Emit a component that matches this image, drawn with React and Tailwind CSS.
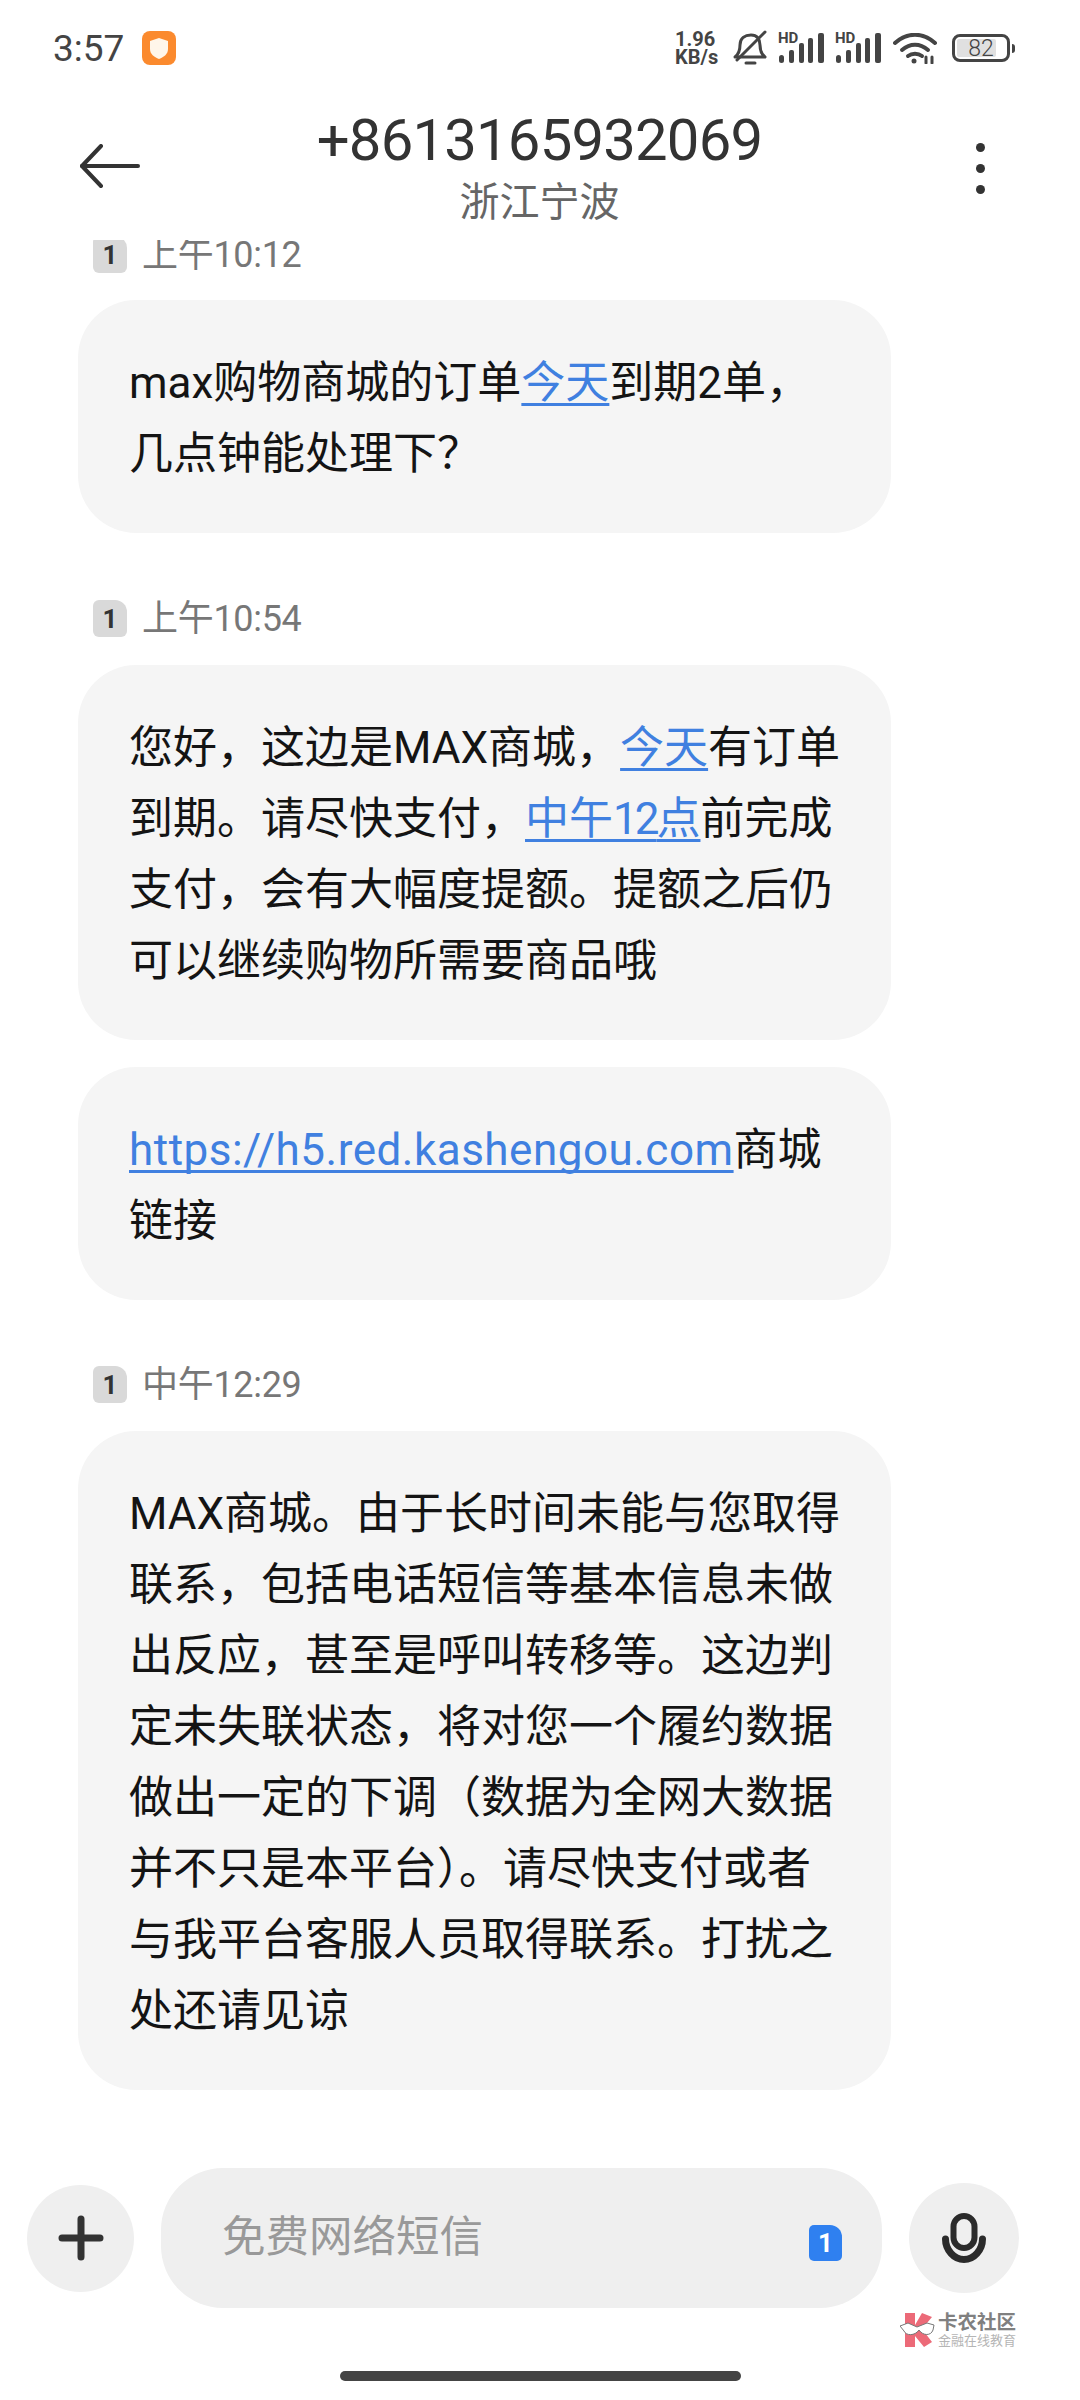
import React from 'react';

const FONT = "font-['Roboto','Noto_Sans_CJK_SC',sans-serif]";

function Link({ children }) {
  return <span className="text-[#4080e0] underline decoration-[3px] underline-offset-[5px] [text-decoration-skip-ink:none]">{children}</span>;
}

function Stamp({ time }) {
  return (
    <div className="flex h-[37px] items-center pl-[15px]">
      <div className="flex h-[37px] w-[34px] items-center justify-center rounded-l-[6px] rounded-br-[6px] rounded-tr-[12px] bg-[#d9d9d9]">
        <span className="text-[26px] font-bold leading-none text-[#333]">1</span>
      </div>
      <span className="ml-[15px] text-[36px] leading-none tracking-[-0.3px] text-[#777]">{time}</span>
    </div>
  );
}

function Bubble({ lines, className = '' }) {
  return (
    <div className={`w-[813px] rounded-[58px] bg-[#f5f5f5] px-[51px] pb-[43px] pt-[48px] text-[44px] leading-[71px] text-[#141414] ${className}`}>
      {lines.map((line, i) => (
        <div key={i} className="whitespace-nowrap">{line}</div>
      ))}
    </div>
  );
}

function Signal() {
  return (
    <svg className="overflow-visible" width="46" height="30" viewBox="0 0 46 30" fill="#444">
      <text x="0" y="10" fontSize="15" fontWeight="700" fontFamily="Roboto, sans-serif">HD</text>
      <rect x="1" y="22" width="5" height="8" rx="2.5" />
      <rect x="11" y="17" width="5" height="13" rx="2" />
      <rect x="21" y="10" width="5" height="20" rx="2" />
      <rect x="30" y="5" width="5" height="25" rx="2" />
      <rect x="40" y="0" width="6" height="30" rx="2" />
    </svg>
  );
}

function StatusBar() {
  return (
    <div className="flex h-[97px] items-start justify-between pl-[53px] pr-[70px] pt-[30px]">
      <div className="flex items-center">
        <span className="mt-[2px] w-[69px] text-[37px] leading-[34px] text-[#444]">3:57</span>
        <svg className="ml-[20px]" width="34" height="34" viewBox="0 0 34 34">
          <rect width="34" height="34" rx="8" fill="#fb8a2e" />
          <path d="M17 7 L26 10 V18 C26 23 22 26 17 28 C12 26 8 23 8 18 V10 Z" fill="#fff6ea" />
        </svg>
      </div>
      <div className="flex items-center">
        <div className="flex w-[46px] flex-col whitespace-nowrap text-[20px] font-bold leading-[18px] text-[#444]">
          <span>1.96</span>
          <span>KB/s</span>
        </div>
        <svg className="ml-[12px]" width="34" height="36" viewBox="0 0 34 36" fill="none" stroke="#444" strokeWidth="3" strokeLinecap="round" strokeLinejoin="round">
          <path d="M2 27 C6 24 7 20 7 15 C7 8 12 5 18 5 C24 5 27 9 27 15 C27 20 28 24 32 27 Z" />
          <path d="M4 30 L32 2" />
          <path d="M13 33 H22" />
        </svg>
        <div className="ml-[11px]"><Signal /></div>
        <div className="ml-[11px]"><Signal /></div>
        <svg className="ml-[12px]" width="44" height="31" viewBox="0 0 44 31" fill="none" stroke="#444" strokeWidth="4" strokeLinecap="round">
          <path d="M2 10 C14 -1 30 -1 42 10" />
          <path d="M9 17 C17 10 27 10 35 17" />
          <path d="M15 23 C19 20 25 20 29 23" />
          <circle cx="21" cy="28" r="2.5" fill="#444" stroke="none" />
          <path d="M33 24 V30 M39 24 V30" strokeWidth="3" />
        </svg>
        <div className="relative ml-[15px] flex h-[28px] w-[58px] items-center rounded-[8px] border-[3px] border-[#444] p-[2px]">
          <div className="h-full w-[82%] rounded-[2px] bg-[#e0e0e0]" />
          <span className="absolute inset-0 flex items-center justify-center text-[23px] font-light leading-none text-[#444]">82</span>
          <div className="absolute -right-[8px] top-[7px] h-[9px] w-[3px] rounded-r-sm bg-[#444]" />
        </div>
      </div>
    </div>
  );
}

function Header() {
  return (
    <div className="grid h-[143px] grid-cols-[1fr_auto_1fr] items-start pl-[80px] pr-[95px]">
      <svg className="mt-[47px]" width="60" height="44" viewBox="0 0 60 44" fill="none" stroke="#333" strokeWidth="4" strokeLinecap="round" strokeLinejoin="round">
        <path d="M21 2 L2 22 L21 42" />
        <path d="M2 22 H58" />
      </svg>
      <div className="flex translate-x-[7px] flex-col items-center">
        <span className="mt-[1px] text-[58px] leading-[84px] tracking-[-0.8px] text-[#333]">+8613165932069</span>
        <span className="-mt-[4px] text-[40px] leading-[50px] text-[#666]">浙江宁波</span>
      </div>
      <div className="mt-[46px] flex flex-col items-end gap-[12px]">
        <div className="h-[9px] w-[9px] rounded-full bg-[#333]" />
        <div className="h-[9px] w-[9px] rounded-full bg-[#333]" />
        <div className="h-[9px] w-[9px] rounded-full bg-[#333]" />
      </div>
    </div>
  );
}

function Messages() {
  return (
    <div className="min-h-0 flex-1 overflow-hidden pl-[78px]">
      <div className="-mt-[4px] flex flex-col">
        <Stamp time="上午10:12" />
        <Bubble
          className="mt-[27px]"
          lines={[
            <>max购物商城的订单<Link>今天</Link>到期2单，</>,
            '几点钟能处理下？',
          ]}
        />
        <div className="mt-[67px]"><Stamp time="上午10:54" /></div>
        <Bubble
          className="mt-[28px]"
          lines={[
            <>您好，这边是MAX商城，<Link>今天</Link>有订单</>,
            <>到期。请尽快支付，<Link>中午<span className="tracking-[-3px]">12</span>点</Link>前完成</>,
            '支付，会有大幅度提额。提额之后仍',
            '可以继续购物所需要商品哦',
          ]}
        />
        <Bubble
          className="mt-[27px]"
          lines={[
            <><span className="tracking-[0.5px]"><Link>https://h5.red.kashengou.com</Link></span>商城</>,
            '链接',
          ]}
        />
        <div className="mt-[66px]"><Stamp time="中午12:29" /></div>
        <Bubble
          className="mt-[28px]"
          lines={[
            'MAX商城。由于长时间未能与您取得',
            '联系，包括电话短信等基本信息未做',
            '出反应，甚至是呼叫转移等。这边判',
            '定未失联状态，将对您一个履约数据',
            '做出一定的下调（数据为全网大数据',
            '并不只是本平台）。请尽快支付或者',
            '与我平台客服人员取得联系。打扰之',
            '处还请见谅',
          ]}
        />
      </div>
    </div>
  );
}

function InputBar() {
  return (
    <div className="flex h-[140px] items-center pl-[27px]">
      <div className="flex h-[107px] w-[107px] items-center justify-center rounded-full bg-[#efefef]">
        <svg width="46" height="46" viewBox="0 0 46 46" stroke="#333" strokeWidth="7" strokeLinecap="round">
          <path d="M23 4 V42 M4 23 H42" />
        </svg>
      </div>
      <div className="ml-[27px] flex h-[140px] w-[721px] items-center justify-between rounded-[62px] bg-[#efefef] pl-[61px] pr-[40px]">
        <span className="text-[43.5px] leading-none text-[#999]">免费网络短信</span>
        <div className="mt-[10px] flex h-[36px] w-[33px] items-center justify-center rounded-l-[5px] rounded-br-[5px] rounded-tr-[12px] bg-[#2f80f0]">
          <span className="text-[26px] font-bold leading-none text-white">1</span>
        </div>
      </div>
      <div className="ml-[27px] flex h-[110px] w-[110px] items-center justify-center rounded-full bg-[#efefef]">
        <svg width="52" height="52" viewBox="0 0 52 52" fill="none" stroke="#2b2b2b" strokeLinecap="round">
          <rect x="15.5" y="4" width="21" height="32" rx="10.5" strokeWidth="6" />
          <path d="M7.5 27 C7.5 38 16 47.5 26 47.5 C36 47.5 44.5 38 44.5 27" strokeWidth="7" />
        </svg>
      </div>
    </div>
  );
}

function Watermark() {
  return (
    <div className="absolute left-[900px] top-[2312px] flex items-center">
      <svg width="37" height="36" viewBox="0 0 37 36">
        <path d="M5 1 H15 V13 L22 1 L32 5 L22 17 L32 30 L24 35 L15 24 V35 H5 Z" fill="#ec6a78" />
        <path d="M0 14 L8 11 L17 15 L27 11 L34 13 L33 18 C31 24 23 24 19 18 C15 24 6 24 4 19 Z" fill="#fff" stroke="#777" strokeWidth="1" />
      </svg>
      <div className="ml-[1px] flex flex-col items-start">
        <span className="whitespace-nowrap text-[19.5px] font-bold leading-[21px] text-[#808080]">卡农社区</span>
        <span className="whitespace-nowrap text-[13px] leading-[15px] text-[#b5b5b5]">金融在线教育</span>
      </div>
    </div>
  );
}

export default function App() {
  return (
    <div className={`relative flex h-[2400px] w-[1080px] flex-col overflow-hidden bg-white ${FONT}`}>
      <StatusBar />
      <Header />
      <Messages />
      <InputBar />
      <div className="flex h-[92px] justify-center pt-[63px]">
        <div className="h-[10px] w-[401px] rounded-full bg-[#444]" />
      </div>
      <Watermark />
    </div>
  );
}
